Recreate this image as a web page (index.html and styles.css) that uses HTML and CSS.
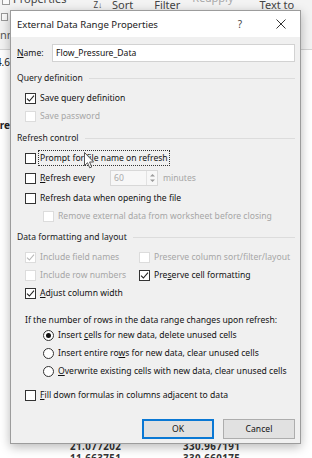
FILE: index.html
```html
<!DOCTYPE html>
<html lang="en">
<head>
<meta charset="utf-8">
<title>External Data Range Properties</title>
<link rel="stylesheet" href="styles.css">
</head>
<body>
<div class="screen">
  <div class="ribbon">
    <div class="rb-row">
      <span class="rb-ico"></span>
      <span class="rb-label props">Properties</span>
      <span class="rb-sep"></span>
      <span class="rb-label az">Z↓</span>
      <span class="rb-label sort">Sort</span>
      <span class="rb-label filter">Filter</span>
      <span class="rb-label reapply">Reapply</span>
      <span class="rb-sep2"></span>
      <span class="rb-label textto">Text to</span>
      <span class="rb-label da">Da</span>
    </div>
    <div class="rb-side">
      <span class="rb-ico small"></span>
      <span class="side-text">nn</span>
    </div>
  </div>
  <div class="sheet">
    <div class="srow r1"><span class="cell-left">24.6</span></div>
    <div class="srow r2"><span class="cell-left bold">Pressure</span></div>
    <div class="srow r3"><span class="num">21.077202</span><span class="num">330.967191</span></div>
    <div class="srow r4"><span class="num">11.663751</span><span class="num">330.660175</span></div>
  </div>

  <div class="dialog">
    <div class="titlebar">
      <span class="title">External Data Range Properties</span>
      <span class="help">?</span>
      <svg class="close" width="10" height="10" viewBox="0 0 10 10"><path d="M0.5 0.5 L9.5 9.5 M9.5 0.5 L0.5 9.5" stroke="#333" stroke-width="1" fill="none"/></svg>
    </div>
    <div class="body">
      <div class="name-row">
        <span class="name-label"><u>N</u>ame:</span>
        <span class="name-input">Flow_Pressure_Data</span>
      </div>

      <div class="section sec-q">Query definition</div>
      <div class="row ind1 r-first-q"><span class="box"><svg width="9" height="9" viewBox="0 0 9 9"><path d="M1 4.6 L3.4 7 L8 1.6" stroke="#222" stroke-width="1.1" fill="none"/></svg></span><span>Save query definition</span></div>
      <div class="row ind1 disabled"><span class="box off"></span><span>Save password</span></div>

      <div class="section sec-r">Refresh control</div>
      <div class="row ind1 r-prompt"><span class="box"></span><span class="focus">Prompt for file name on refresh</span></div>
      <div class="row ind1 r-every"><span class="box"></span><span class="every-label"><u>R</u>efresh every</span>
        <span class="spin"><span class="spin-val">60</span><span class="spin-btns"><svg width="5" height="10" viewBox="0 0 5 10"><path d="M0 3.5 L2.5 1 L5 3.5 Z M0 6.5 L2.5 9 L5 6.5 Z" fill="#9a9a9a"/></svg></span></span>
        <span class="minutes">minutes</span></div>
      <div class="row ind1"><span class="box"></span><span>Refresh data when opening the file</span></div>
      <div class="row ind2 disabled"><span class="box off"></span><span>Remove external data from worksheet before closing</span></div>

      <div class="section sec-d">Data formatting and layout</div>
      <div class="grid2">
        <div class="row disabled"><span class="box off"><svg width="9" height="9" viewBox="0 0 9 9"><path d="M1 4.6 L3.4 7 L8 1.6" stroke="#b8b8b8" stroke-width="1.1" fill="none"/></svg></span><span>Include field names</span></div>
        <div class="row disabled"><span class="box off"></span><span>Preserve column sort/filter/layout</span></div>
        <div class="row disabled"><span class="box off"></span><span>Include row numbers</span></div>
        <div class="row"><span class="box"><svg width="9" height="9" viewBox="0 0 9 9"><path d="M1 4.6 L3.4 7 L8 1.6" stroke="#222" stroke-width="1.1" fill="none"/></svg></span><span>Pre<u>s</u>erve cell formatting</span></div>
      </div>
      <div class="row ind1"><span class="box"><svg width="9" height="9" viewBox="0 0 9 9"><path d="M1 4.6 L3.4 7 L8 1.6" stroke="#222" stroke-width="1.1" fill="none"/></svg></span><span><u>A</u>djust column width</span></div>

      <div class="row ind1 r-if">If the number of rows in the data range changes upon refresh:</div>
      <div class="row ind2"><span class="radio on"></span><span>Insert <u>c</u>ells for new data, delete unused cells</span></div>
      <div class="row ind2"><span class="radio"></span><span>Insert entire ro<u>w</u>s for new data, clear unused cells</span></div>
      <div class="row ind2"><span class="radio"></span><span><u>O</u>verwrite existing cells with new data, clear unused cells</span></div>

      <div class="row ind1 r-fill"><span class="box"></span><span><u>F</u>ill down formulas in columns adjacent to data</span></div>

      <div class="buttons">
        <button class="btn ok">OK</button>
        <button class="btn">Cancel</button>
      </div>
    </div>
    <svg class="cursor" width="11" height="17" viewBox="0 0 11 17"><path d="M0.5 0.5 L0.5 13.5 L3.5 10.7 L5.7 15.8 L7.7 15 L5.6 10 L9.6 10 Z" fill="#fff" stroke="#555" stroke-width="1"/></svg>
  </div>
</div>
</body>
</html>
```

FILE: styles.css
```css
* { box-sizing: border-box; }
html, body { margin: 0; padding: 0; }
body {
  width: 312px;
  height: 458px;
  overflow: hidden;
  background: #fff;
  font-family: "Noto Sans", "Open Sans", sans-serif;
  color: #1a1a1a;
}
.screen {
  position: relative;
  width: 312px;
  height: 458px;
  overflow: hidden;
}

/* ---------- background (Excel) ---------- */
.ribbon {
  height: 50px;
  background: #f3f3f3;
  border-bottom: 1px solid #d4d4d4;
}
.rb-row {
  display: flex;
  align-items: flex-start;
  height: 12px;
  font-size: 11px;
  color: #444;
  white-space: nowrap;
}
.rb-ico {
  width: 8px; height: 8px;
  border: 1px solid #999;
  background: #fafafa;
  margin: -3px 0 0 2px;
  flex: none;
}
.rb-label { line-height: 12px; }
.props { margin: -7px 0 0 3px; }
.rb-sep { width: 1px; height: 10px; background: #ccc; margin: 0 0 0 25px; }
.az { font-size: 8px; margin: -1px 0 0 2px; }
.sort { margin: -1px 0 0 10px; }
.filter { margin: -1px 0 0 21px; }
.reapply { margin: -8px 0 0 12px; color: #aaa; }
.rb-sep2 { width: 1px; height: 12px; background: #d0d0d0; margin: 0 0 0 16px; }
.textto { margin: -1px 0 0 10px; }
.da { margin: 8px 0 0 26px; }
.rb-side {
  display: flex;
  flex-direction: column;
  width: 10px;
}
.rb-ico.small { margin: 1px 0 0 1px; width: 7px; height: 8px; }
.side-text { font-size: 11px; color: #555; margin-top: 8px; line-height: 12px; }

.sheet {
  display: flex;
  flex-direction: column;
  font-size: 10px;
  color: #222;
}
.srow { display: flex; height: 12px; line-height: 12px; }
.cell-left {
  width: 10px;
  overflow: hidden;
  display: flex;
  justify-content: flex-end;
  white-space: nowrap;
}
.bold { font-weight: 700; }
.r1 { margin-top: 6px; }
.r2 { margin-top: 51px; }
.r3 { margin-top: 310px; }
.num { font-weight: 700; font-size: 9.8px; line-height: 11px; letter-spacing: 0.4px; color: #333; }
.r3 .num:first-child, .r4 .num:first-child { margin-left: 70px; width: 113px; }

/* ---------- dialog ---------- */
.dialog {
  position: absolute;
  left: 10px;
  top: 10px;
  width: 291px;
  height: 434px;
  background: #f0f0f0;
  border: 1px solid #9c9c9c;
  box-shadow: 0 3px 10px rgba(0,0,0,0.28);
  font-size: 8.6px;
  color: #111;
}
.titlebar {
  height: 26px;
  background: #fff;
  display: flex;
  align-items: center;
  padding-left: 6px;
}
.title { font-size: 9.6px; color: #222; flex: 1; }
.help { font-size: 10px; color: #444; margin-right: 34px; }
.close { margin-right: 14px; }

.body { padding: 7px 5px 0 6px; }

.name-row { display: flex; align-items: center; height: 18px; }
.name-label { width: 35px; }
.name-input {
  flex: 1;
  height: 18px;
  background: #fff;
  border: 1px solid #d2d2d2;
  padding-left: 3px;
  display: flex;
  align-items: center;
}

.section {
  display: flex;
  align-items: center;
  height: 18px;
  color: #1a1a1a;
}
.section::after {
  content: "";
  flex: 1;
  border-top: 1px solid #dcdcdc;
  margin-left: 6px;
}
.sec-q { margin-top: 7px; }
.r-first-q { margin-top: 2px; }
.sec-r { margin-top: 4px; }
.sec-d { margin-top: 3px; }

.row {
  display: flex;
  align-items: center;
  height: 18px;
  white-space: nowrap;
}
.ind1 { padding-left: 8px; }
.ind2 { padding-left: 26px; }
.disabled { color: #a6a6a6; }

.box {
  width: 11px;
  height: 11px;
  border: 1px solid #333;
  background: #fff;
  margin-right: 4px;
  flex: none;
  display: flex;
  align-items: center;
  justify-content: center;
}
.box.off { border-color: #dcdcdc; }

.radio {
  width: 11px;
  height: 11px;
  border: 1px solid #333;
  border-radius: 50%;
  background: #fff;
  margin-right: 4px;
  flex: none;
  display: flex;
  align-items: center;
  justify-content: center;
}
.radio.on::after {
  content: "";
  width: 5px;
  height: 5px;
  border-radius: 50%;
  background: #111;
}

.r-prompt { margin-top: 2px; }
.focus { outline: 1px dotted #333; outline-offset: 1px; line-height: 12px; }
.r-every { height: 20px; margin: 1px 0; }
.every-label { width: 70px; }
.spin {
  width: 48px;
  height: 16px;
  border: 1px solid #d8d8d8;
  background: #f7f7f7;
  display: flex;
  color: #aaa;
}
.spin-val { flex: 1; padding-left: 3px; display: flex; align-items: center; }
.spin-btns {
  width: 11px;
  border-left: 1px solid #e2e2e2;
  display: flex;
  align-items: center;
  justify-content: center;
}
.minutes { color: #a6a6a6; margin-left: 5px; }

.grid2 {
  display: grid;
  grid-template-columns: 114px 1fr;
  padding-left: 8px;
  margin-top: 2px;
}

.r-if { margin-top: 12px; height: 12px; }
.r-fill { margin-top: 6px; }

.buttons {
  display: flex;
  justify-content: flex-end;
  gap: 9px;
  margin-top: 15px;
}
.btn {
  width: 72px;
  height: 20px;
  background: #e1e1e1;
  border: 1px solid #adadad;
  font-family: inherit;
  font-size: 8.6px;
  color: #111;
  padding: 0;
}
.btn.ok { border: 1px solid #0a78d4; box-shadow: inset 0 0 0 1px #0a78d4; }

.cursor {
  position: absolute;
  left: 73px;
  top: 141px;
}
```
